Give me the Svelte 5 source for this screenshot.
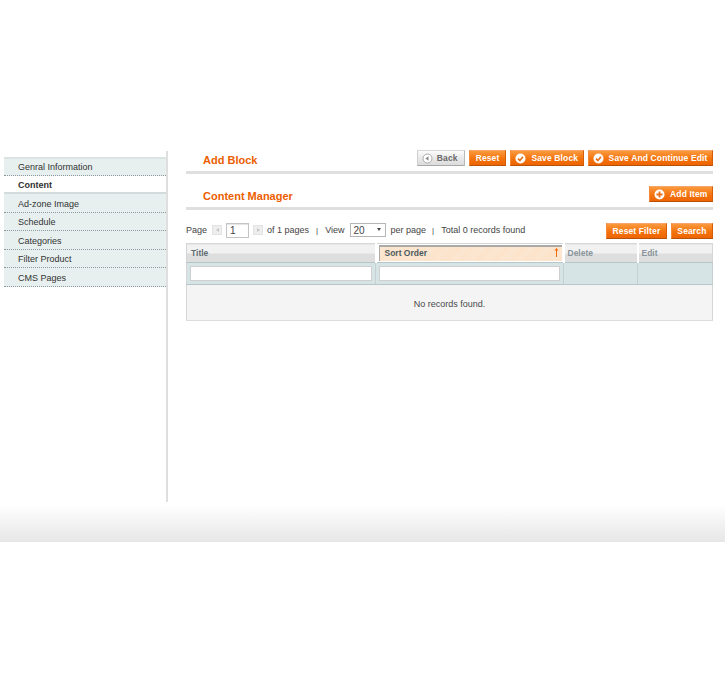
<script>
    const tabs = [
        { label: 'Genral Information' },
        { label: 'Content', active: true },
        { label: 'Ad-zone Image' },
        { label: 'Schedule' },
        { label: 'Categories' },
        { label: 'Filter Product' },
        { label: 'CMS Pages' }
    ];
</script>

<div class="page">
    <div class="columns">
        <aside class="side">
            <ul class="tabs">
                {#each tabs as tab}
                    <li class:active={tab.active}>{tab.label}</li>
                {/each}
            </ul>
        </aside>

        <main class="main">
            <div class="head first">
                <h3>Add Block</h3>
                <div class="actions">
                    <button class="btn back">
                        <svg width="11" height="11" viewBox="0 0 11 11"><circle cx="5.5" cy="5.5" r="4.5" fill="#fff" stroke="#aaa"/><path d="M6.5 3.2v4.6L3.4 5.5z" fill="#888"/></svg>
                        Back
                    </button>
                    <button class="btn">Reset</button>
                    <button class="btn icon">
                        <svg width="11" height="11" viewBox="0 0 11 11"><circle cx="5.5" cy="5.5" r="5" fill="#fff"/><path d="M3 5.6l1.9 1.9L8 3.8" fill="none" stroke="#e8701a" stroke-width="1.7"/></svg>
                        <span class="gap">Save Block</span>
                    </button>
                    <button class="btn icon">
                        <svg width="11" height="11" viewBox="0 0 11 11"><circle cx="5.5" cy="5.5" r="5" fill="#fff"/><path d="M3 5.6l1.9 1.9L8 3.8" fill="none" stroke="#e8701a" stroke-width="1.7"/></svg>
                        <span class="gap">Save And Continue Edit</span>
                    </button>
                </div>
            </div>

            <div class="head second">
                <h3>Content Manager</h3>
                <div class="actions">
                    <button class="btn icon">
                        <svg width="11" height="11" viewBox="0 0 11 11"><circle cx="5.5" cy="5.5" r="5" fill="#fff"/><path d="M5.5 2.5v6M2.5 5.5h6" stroke="#e8701a" stroke-width="1.8"/></svg>
                        <span class="gap">Add Item</span>
                    </button>
                </div>
            </div>

            <div class="pager">
                <div class="pager-left">
                    <span>Page</span>
                    <span class="arrow first-arrow"><i class="prev"></i></span>
                    <span class="page-input">1</span>
                    <span class="arrow"><i class="next"></i></span>
                    <span>of 1 pages</span>
                    <span class="sep">|</span>
                    <span>View</span>
                    <span class="view-select">20<i></i></span>
                    <span>per page</span>
                    <span class="sep tight">|</span>
                    <span>Total 0 records found</span>
                </div>
                <div class="pager-right">
                    <button class="btn">Reset Filter</button>
                    <button class="btn">Search</button>
                </div>
            </div>

            <table class="grid">
                <colgroup>
                    <col class="c1" />
                    <col class="c2" />
                    <col class="c3" />
                    <col />
                </colgroup>
                <thead>
                    <tr class="titles">
                        <th>Title</th>
                        <th class="sorted">
                            <span class="sort-cell">
                                Sort Order
                                <svg width="5" height="9" viewBox="0 0 5 9"><path d="M2.5 2v7" stroke="#f26a00" stroke-width="1" fill="none"/><path d="M2.5 0L4.5 2.6H0.5z" fill="#f26a00"/></svg>
                            </span>
                        </th>
                        <th class="muted">Delete</th>
                        <th class="muted">Edit</th>
                    </tr>
                    <tr class="filters">
                        <td><span class="field"></span></td>
                        <td><span class="field"></span></td>
                        <td></td>
                        <td></td>
                    </tr>
                </thead>
                <tbody>
                    <tr><td class="empty" colspan="4">No records found.</td></tr>
                </tbody>
            </table>
        </main>
    </div>
    <div class="footer-band"></div>
</div>

<style>
    :global(body) {
        background: #fff;
        font-family: "Liberation Sans", Arial, sans-serif;
        font-size: 9px;
        color: #2f2f2f;
    }

    .page {
        width: 725px;
        padding-top: 151px;
        box-sizing: border-box;
    }

    .columns {
        display: flex;
        height: 351px;
        padding-left: 4px;
    }

    .side {
        width: 162px;
        flex: none;
        border-right: 2px solid #dfdfdf;
        padding-top: 6px;
    }

    .tabs {
        list-style: none;
        margin: 0;
        padding: 0;
    }

    .tabs li {
        height: 18.5px;
        box-sizing: border-box;
        padding: 4.5px 0 0 14px;
        line-height: 11px;
        background: #e7efef;
        border-bottom: 1px dotted #8a9aa0;
        color: #333;
    }

    .tabs li:first-child {
        border-top: 2px solid #dbe3e3;
        padding-top: 3px;
    }

    .tabs li.active {
        background: #fff;
        font-weight: bold;
        padding-top: 4px;
        border-bottom: 2px solid #d3dcdc;
        color: #2f2f2f;
    }

    .main {
        flex: 1;
        min-width: 0;
        padding: 0 12px 0 18px;
    }

    .head {
        display: flex;
        justify-content: space-between;
        align-items: flex-start;
        border-bottom: 3px solid #dfdfdf;
    }

    .head.first {
        height: 20px;
    }

    .head.second {
        height: 20px;
        margin-top: 13px;
    }

    h3 {
        margin: 2px 0 0 17px;
        font-size: 11px;
        line-height: 14px;
        font-weight: bold;
        color: #eb5e00;
    }

    .actions {
        display: flex;
        gap: 4px;
        margin-top: -1px;
    }

    .btn {
        height: 14px;
        display: inline-flex;
        align-items: center;
        padding: 0 6px;
        border: 1px solid #ed6502;
        border-color: #f7a566 #d85e06 #b85208 #f28a3a;
        background: linear-gradient(#fb9a3e, #f4730c 55%, #ed6502);
        color: #fff;
        font-family: inherit;
        font-size: 8.5px;
        font-weight: bold;
        line-height: 12px;
        letter-spacing: 0.13px;
        box-sizing: content-box;
        border-radius: 0;
    }

    .btn svg {
        flex: none;
    }

    .btn.icon {
        padding: 0 4.5px 0 4px;
    }

    .gap {
        margin-left: 5px;
    }

    .btn.back {
        gap: 4px;
        padding: 0 6px 0 4px;
        border-color: #d8d8d8 #b9b9b9 #a9a9a9 #cfcfcf;
        background: linear-gradient(#fbfbfb, #e8e8e8 55%, #dcdcdc);
        color: #6a6a6a;
    }

    .pager {
        display: flex;
        justify-content: space-between;
        align-items: center;
        height: 22px;
        margin-top: 10px;
    }

    .pager-left {
        display: flex;
        align-items: center;
        margin-bottom: 2px;
        color: #444;
    }

    .arrow {
        display: inline-flex;
        width: 8px;
        height: 8px;
        margin: 0 4px;
        align-items: center;
        justify-content: center;
        background: #eeeeee;
        border: 1px solid #e2e2e2;
    }

    .first-arrow {
        margin-left: 5px;
    }

    .arrow i {
        width: 0;
        height: 0;
        border-top: 2px solid transparent;
        border-bottom: 2px solid transparent;
    }

    .arrow .prev { border-right: 3px solid #c6c6c6; }
    .arrow .next { border-left: 3px solid #c6c6c6; }

    .page-input {
        width: 18px;
        height: 13px;
        border: 1px solid #c4c4c4;
        box-shadow: inset 0 1px 1px #e4e4e4;
        padding-left: 3px;
        line-height: 14px;
        font-size: 10px;
    }

    .sep {
        margin: 0 7px;
        font-size: 8px;
    }

    .sep.tight {
        margin: 0 7px 0 6px;
    }

    .view-select {
        position: relative;
        width: 31px;
        height: 12px;
        margin: 0 5px;
        padding-left: 3px;
        border: 1px solid #b5b5b5;
        line-height: 13px;
        font-size: 10px;
    }

    .view-select i {
        position: absolute;
        right: 4px;
        top: 4px;
        border-left: 2px solid transparent;
        border-right: 2px solid transparent;
        border-top: 3px solid #444;
    }

    .pager-right {
        display: flex;
        gap: 4px;
    }

    .pager-right .btn {
        padding: 0 5.5px;
    }

    .grid {
        width: 527px;
        margin-top: 1px;
        border-collapse: collapse;
        table-layout: fixed;
        border: 1px solid #d6d6d6;
    }

    .c1 { width: 189px; }
    .c2 { width: 188px; }
    .c3 { width: 74px; }

    .titles th {
        height: 17px;
        padding: 0 0 0 4px;
        text-align: left;
        font-size: 8.5px;
        font-weight: bold;
        color: #5f6d74;
        background: linear-gradient(#f1f1f1 50%, #dedede 50%);
        border-right: 2px solid #fff;
        border-bottom: 1px solid #b7c6c9;
    }

    .titles th:last-child {
        border-right: 0;
    }

    .titles th.muted {
        color: #8a949a;
        padding-left: 3px;
    }

    .titles th.sorted {
        padding: 0 0 1px 4px;
        background: #fff;
    }

    .sort-cell {
        display: flex;
        align-items: center;
        justify-content: space-between;
        height: 16px;
        margin: 0 1px 0 -2px;
        padding: 0 3px 2px 5px;
        color: #4e5a60;
        background: repeating-linear-gradient(135deg, #fbe8d4 0 1px, #fde2c8 1px 2px);
        border-top: 2px solid #a9a9a9;
        border-left: 1px solid #a9a9a9;
        box-sizing: border-box;
    }

    .filters td {
        height: 22px;
        padding: 0 3px;
        background: #d7e4e6;
        border-right: 1px solid #c6cfd1;
        border-bottom: 1px solid #b7c6c9;
        box-sizing: border-box;
    }

    .field {
        display: block;
        height: 13px;
        border: 1px solid #cfcfcf;
        background: #fff;
    }

    .empty {
        height: 36px;
        padding: 2px 0 0;
        box-sizing: border-box;
        text-align: center;
        background: #f4f4f4;
        color: #4a4a4a;
        border-bottom: 1px solid #dcdcdc;
    }

    .footer-band {
        height: 40px;
        background: linear-gradient(#fff 8%, #e6e6e6);
    }
</style>
